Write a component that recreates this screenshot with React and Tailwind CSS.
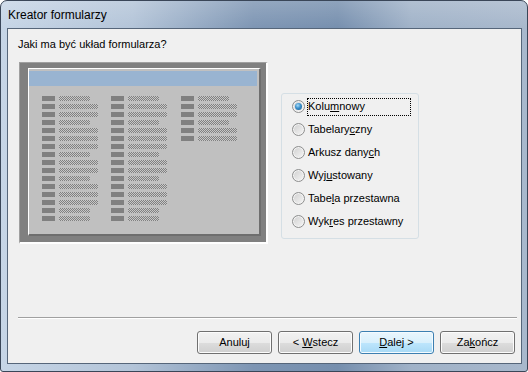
import React from "react";

const col1 = ["s","l","l","s","l","l","l","s","l","l","s","l","l","l","s","s"];
const col3 = ["s","l","l","s","l","l"];

function Row({ w }) {
  return (
    <div className="flex items-center gap-[4px] h-[5px]">
      <div className="w-[13px] h-[5px] bg-[#808080]" />
      <div
        className={
          (w === "l" ? "w-[39px] " : "w-[31px] ") +
          "h-[5px] bg-[repeating-conic-gradient(#808080_0%_25%,#c8c8c8_0%_50%)] bg-[length:2px_2px]"
        }
      />
    </div>
  );
}

function Col({ items, cls }) {
  return (
    <div className={"flex flex-col gap-[3px] " + cls}>
      {items.map((w, i) => (
        <Row key={i} w={w} />
      ))}
    </div>
  );
}

function Radio({ checked, focused, children }) {
  return (
    <div className="h-[23px] flex items-center">
      <div className="w-[13px] h-[13px] rounded-full border border-[#8e8f8f] bg-[linear-gradient(135deg,#cfcfcf,#f6f6f6)] flex items-center justify-center shadow-[inset_0_0_0_1px_#f4f4f4]">
        {checked && (
          <div className="w-[7px] h-[7px] rounded-full bg-[radial-gradient(circle_at_40%_35%,#a8dcf8_0%,#3a8fcb_45%,#1b5a8c_100%)]" />
        )}
      </div>
      <div
        className={
          "ml-[2px] h-[18px] flex items-center leading-[13px] " +
          (focused ? "w-[104px] border border-dotted border-black" : "border border-transparent")
        }
      >
        <span>{children}</span>
      </div>
    </div>
  );
}

function Btn({ children, primary }) {
  return (
    <div
      className={
        "w-[75px] h-[23px] rounded-[3px] border flex items-center justify-center text-[11px] text-black " +
        (primary
          ? "border-[#3c7fb1] bg-[linear-gradient(to_bottom,#eaf6fd_0%,#d9f0fc_50%,#bee6fd_50%,#a7d9f5_100%)] shadow-[inset_0_0_0_1px_#f4fbff]"
          : "border-[#707070] bg-[linear-gradient(to_bottom,#f2f2f2_0%,#ebebeb_50%,#dddddd_50%,#cfcfcf_100%)] shadow-[inset_0_0_0_1px_#fcfcfc]")
      }
    >
      <span className="whitespace-pre">{children}</span>
    </div>
  );
}

export default function App() {
  return (
    <div className="w-[528px] h-[372px] overflow-hidden border border-[#3a4658] rounded-t-[7px] rounded-b-[3px] font-['Liberation_Sans',Arial,sans-serif] bg-[linear-gradient(to_bottom,rgba(255,255,255,0.18),rgba(255,255,255,0)_28px),linear-gradient(to_right,#c6d5e6_0%,#b3c4d8_25%,#7d95b3_48%,#768fae_64%,#a0b2c8_78%,#a8b8cc_100%)]">
      <div className="h-[27px] flex items-center pl-[7px] text-[12px] text-black">
        Kreator formularzy
      </div>
      <div className="ml-[6px] w-[515px] h-[336px] border border-[#56667a] bg-[#f0f0f0] flex flex-col text-[11px] text-black">
        <div className="pt-[9px] pl-[10px] leading-[13px]">Jaki ma być układ formularza?</div>
        <div className="flex items-start mt-[11px]">
          <div className="ml-[11px] w-[249px] h-[182px] bg-[#808080] border-t border-l border-[#a0a0a0] border-r-2 border-b-2 border-r-white border-b-white pl-[8px] pt-[5px]">
            <div className="w-[233px] h-[168px] bg-[#c0c0c0] border-t border-l border-white border-r-2 border-b-2 border-r-[#6e6e6e] border-b-[#6e6e6e]">
              <div className="mt-[2px] w-[228px] h-[15px] bg-[#99b4d1]" />
              <div className="flex pt-[10px] pl-[13px]">
                <Col items={col1} cls="w-[69px]" />
                <Col items={col1} cls="w-[70px]" />
                <Col items={col3} cls="" />
              </div>
            </div>
          </div>
          <div className="ml-[13px] mt-[31px] w-[138px] h-[146px] border border-[#d5dfe5] rounded-[3px] pt-[1px] pl-[10px]">
            <Radio checked focused>
              Kolu<span className="underline">m</span>nowy
            </Radio>
            <Radio>
              Tabelary<span className="underline">c</span>zny
            </Radio>
            <Radio>
              Arkusz dany<span className="underline">c</span>h
            </Radio>
            <Radio>
              Wyj<span className="underline">u</span>stowany
            </Radio>
            <Radio>
              Tabe<span className="underline">l</span>a przestawna
            </Radio>
            <Radio>
              Wyk<span className="underline">r</span>es przestawny
            </Radio>
          </div>
        </div>
        <div className="mt-auto ml-[10px] mr-[4px] h-[2px] border-t border-[#a0a0a0] border-b border-b-white" />
        <div className="mt-[12px] mb-[9px] pr-[6px] flex justify-end gap-[6px]">
          <Btn>Anuluj</Btn>
          <Btn>
            {"< "}<span className="underline">W</span>stecz
          </Btn>
          <Btn primary>
            <span className="underline">D</span>alej {">"}
          </Btn>
          <Btn>
            Za<span className="underline">k</span>ończ
          </Btn>
        </div>
      </div>
    </div>
  );
}
